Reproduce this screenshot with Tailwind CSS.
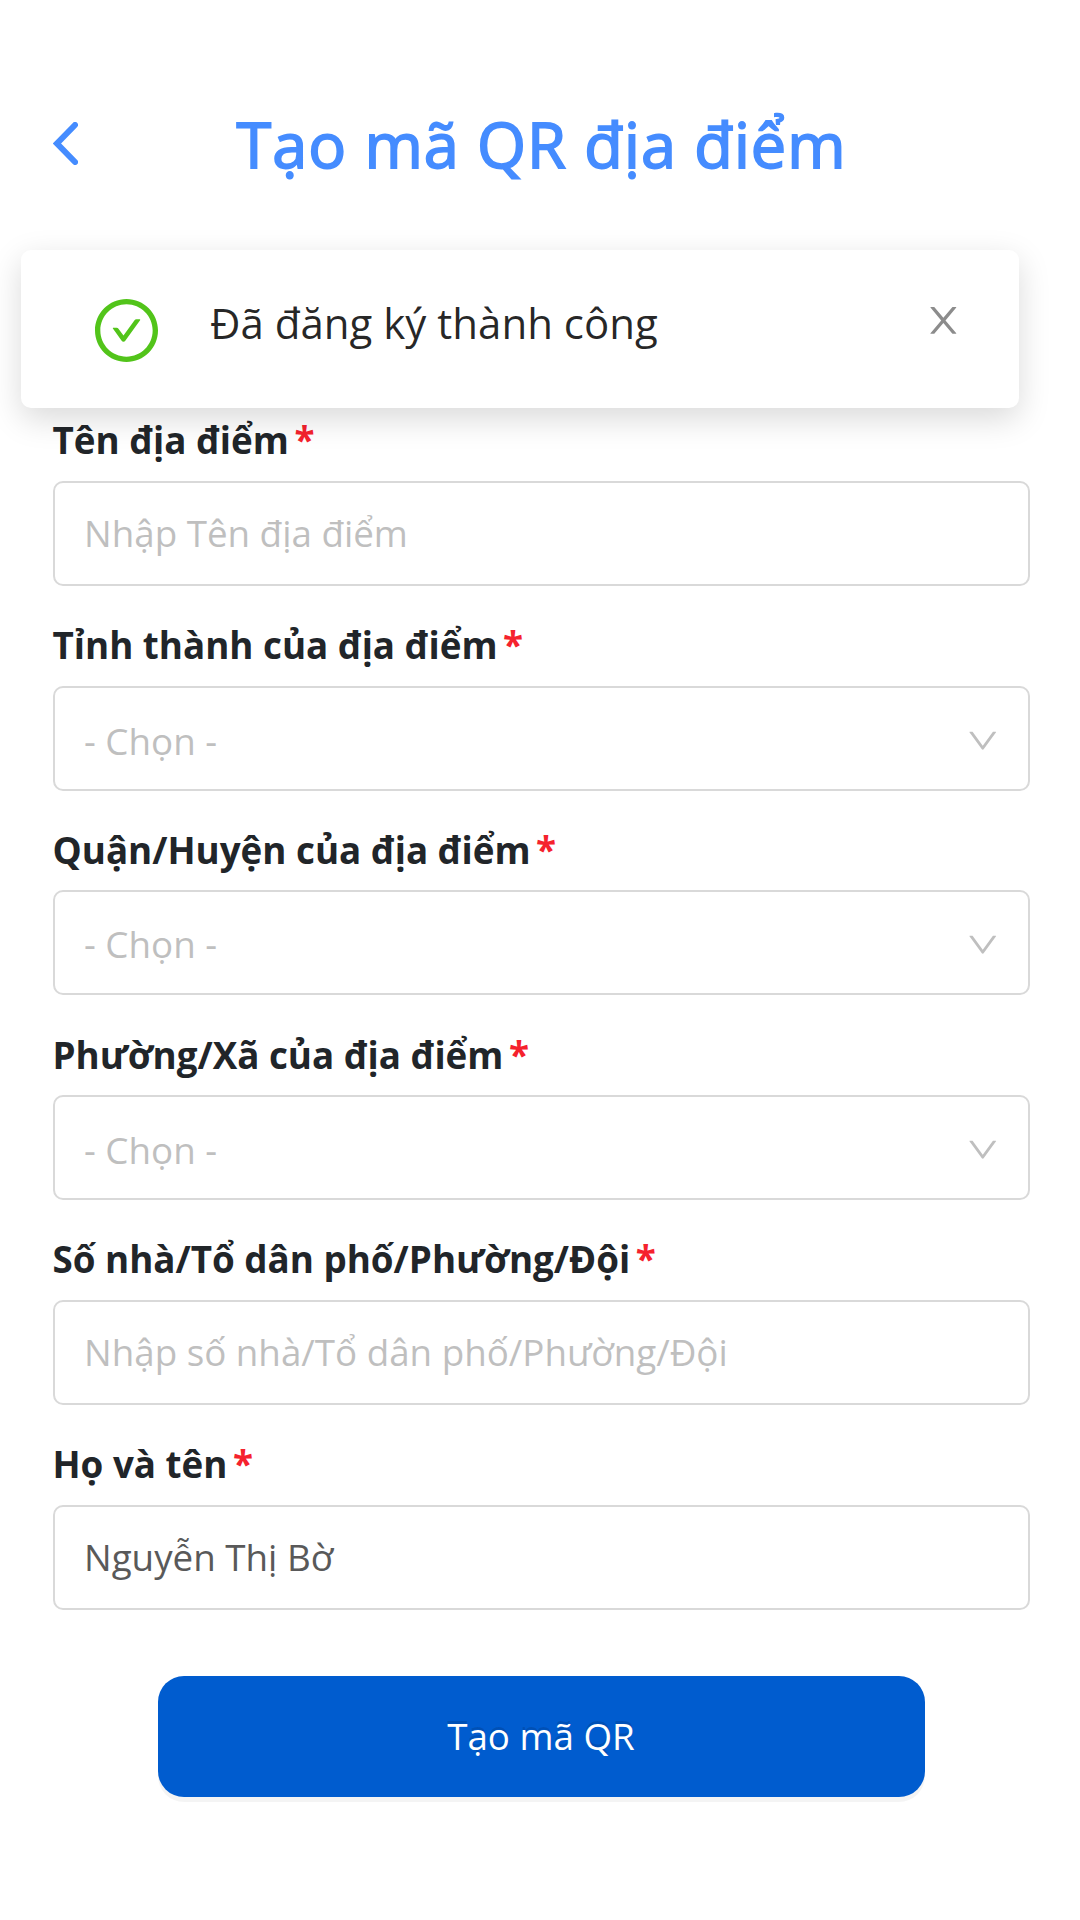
<!DOCTYPE html>
<html lang="vi">

<head>
  <meta charset="UTF-8" />
  <meta name="viewport" content="width=device-width, initial-scale=1.0" />
  <title>Tạo mã QR địa điểm</title>
  <script src="https://cdn.jsdelivr.net/npm/@tailwindcss/browser@4"></script>
</head>

<body class="relative min-h-screen overflow-hidden bg-white font-['Open_Sans',sans-serif] text-[36.75px] text-[#212529]">
  <!-- Header -->
  <header class="grid grid-cols-[100px_1fr_100px] items-center px-[53px] pt-[94px] h-[193px]">
    <button class="w-[25px]">
      <svg class="block w-[25px] h-[43px]" viewBox="0 0 25 43" fill="none" stroke="#458cff" stroke-width="6" stroke-linecap="round">
        <path d="M22 3L4 21.500L22 40" />
      </svg>
    </button>
    <h1 class="pl-[3px] text-center text-[63px] leading-[99px] tracking-[1px] text-[#458cff] whitespace-nowrap [-webkit-text-stroke:1.8px_#458cff]">Tạo mã QR địa điểm</h1>
  </header>

  <!-- Formulario -->
  <form class="flex flex-col gap-[30px] px-[53px] pr-[50px] pt-[218px]">
    <div class="flex flex-col gap-2.5">
      <label class="-ml-[0.5px] font-bold leading-[59.75px]">Tên địa điểm<span class="ml-[5.5px] text-[#f5222d]">*</span></label>
      <input type="text" placeholder="Nhập Tên địa điểm"
        class="h-[105px] w-full rounded-[10px] border-2 border-[#d9d9d9] px-[29px] pb-px text-[#595959] placeholder:text-[#bfbfbf]" />
    </div>

    <div class="flex flex-col gap-2.5">
      <label class="-ml-[0.5px] font-bold leading-[59.75px]">Tỉnh thành của địa điểm<span class="ml-[5.5px] text-[#f5222d]">*</span></label>
      <div class="flex h-[105px] items-center justify-between rounded-[10px] border-2 border-[#d9d9d9] pl-[29px] pr-[30px] text-[#bfbfbf]">
        <span class="pt-[7px]">- Chọn -</span>
        <svg class="mt-[5px] size-[31.5px]" viewBox="64 64 896 896" fill="currentColor"><path d="M884 256h-75c-5.1 0-9.9 2.5-12.9 6.6L512 654.2 227.9 262.6c-3-4.1-7.8-6.6-12.9-6.6h-75c-6.5 0-10.3 7.4-6.5 12.7l352.6 486.1c12.8 17.6 39 17.6 51.7 0l352.6-486.1c3.9-5.3.1-12.7-6.4-12.7z" /></svg>
      </div>
    </div>

    <div class="flex flex-col gap-2.5">
      <label class="-ml-[0.5px] font-bold leading-[59px]">Quận/Huyện của địa điểm<span class="ml-[5.5px] text-[#f5222d]">*</span></label>
      <div class="flex h-[105px] items-center justify-between rounded-[10px] border-2 border-[#d9d9d9] pl-[29px] pr-[30px] text-[#bfbfbf]">
        <span class="pt-1.5">- Chọn -</span>
        <svg class="mt-[5px] size-[31.5px]" viewBox="64 64 896 896" fill="currentColor"><path d="M884 256h-75c-5.1 0-9.9 2.5-12.9 6.6L512 654.2 227.9 262.6c-3-4.1-7.8-6.6-12.9-6.6h-75c-6.5 0-10.3 7.4-6.5 12.7l352.6 486.1c12.8 17.6 39 17.6 51.7 0l352.6-486.1c3.9-5.3.1-12.7-6.4-12.7z" /></svg>
      </div>
    </div>

    <div class="flex flex-col gap-2.5">
      <label class="-ml-[0.5px] font-bold leading-[60.5px]">Phường/Xã của địa điểm<span class="ml-[5.5px] text-[#f5222d]">*</span></label>
      <div class="flex h-[105px] items-center justify-between rounded-[10px] border-2 border-[#d9d9d9] pl-[29px] pr-[30px] text-[#bfbfbf]">
        <span class="pt-1.5">- Chọn -</span>
        <svg class="mt-[5px] size-[31.5px]" viewBox="64 64 896 896" fill="currentColor"><path d="M884 256h-75c-5.1 0-9.9 2.5-12.9 6.6L512 654.2 227.9 262.6c-3-4.1-7.8-6.6-12.9-6.6h-75c-6.5 0-10.3 7.4-6.5 12.7l352.6 486.1c12.8 17.6 39 17.6 51.7 0l352.6-486.1c3.9-5.3.1-12.7-6.4-12.7z" /></svg>
      </div>
    </div>

    <div class="flex flex-col gap-2.5">
      <label class="-ml-[0.5px] font-bold leading-[59.75px]">Số nhà/Tổ dân phố/Phường/Đội<span class="ml-[5.5px] text-[#f5222d]">*</span></label>
      <input type="text" placeholder="Nhập số nhà/Tổ dân phố/Phường/Đội"
        class="h-[105px] w-full rounded-[10px] border-2 border-[#d9d9d9] px-[29px] pb-px text-[#595959] placeholder:text-[#bfbfbf]" />
    </div>

    <div class="flex flex-col gap-2.5">
      <label class="-ml-[0.5px] font-bold leading-[59.75px]">Họ và tên<span class="ml-[5.5px] text-[#f5222d]">*</span></label>
      <input type="text" value="Nguyễn Thị Bờ"
        class="h-[105px] w-full rounded-[10px] border-2 border-[#d9d9d9] px-[29px] text-[#595959] placeholder:text-[#bfbfbf]" />
    </div>

    <button type="button"
      class="mx-auto mt-9 h-[121px] w-[767px] rounded-[26px] bg-[#005ccf] pr-px pt-px text-white shadow-[0_5px_0_rgba(0,0,0,0.045)] [text-shadow:0_-3px_0_rgba(0,0,0,0.12)]">Tạo mã QR</button>
  </form>

  <!-- Notificación -->
  <div class="absolute left-[21px] top-[250px] flex h-[158px] w-[998px] items-start rounded-[10px] bg-white pl-[74px] pr-[57px] shadow-[0_10.5px_31.5px_rgba(0,0,0,0.15)]">
    <svg class="mt-[49px] size-[63px] shrink-0" viewBox="64 64 896 896" fill="#52c41a">
      <path d="M699 353h-46.900c-10.200 0-19.900 4.900-25.900 13.300L469 584.300l-71.200-98.800c-6-8.300-15.600-13.300-25.900-13.300H325c-6.500 0-10.300 7.400-6.500 12.700l124.600 172.800a31.800 31.800 0 0051.700 0l210.600-292c3.900-5.300.1-12.700-6.400-12.700z" />
      <path d="M512 64C264.600 64 64 264.600 64 512s200.600 448 448 448 448-200.600 448-448S759.400 64 512 64zm0 820c-205.400 0-372-166.600-372-372s166.600-372 372-372 372 166.600 372 372-166.600 372-372 372z" />
    </svg>
    <p class="ml-[52px] mt-[40px] flex-1 text-[42px] leading-[66px] text-black/85">Đã đăng ký thành công</p>
    <button class="mt-[52px]">
      <svg class="block size-[36.75px]" viewBox="64 64 896 896" fill="#8c8c8c"><path d="M563.8 512l262.500-312.900c4.400-5.200.7-13.100-6.100-13.100h-79.800c-4.700 0-9.200 2.100-12.300 5.700L511.600 449.800 295.100 191.700c-3-3.600-7.500-5.700-12.300-5.700H203c-6.800 0-10.500 7.900-6.100 13.100L459.400 512 196.900 824.900A7.950 7.950 0 00203 838h79.800c4.700 0 9.200-2.100 12.300-5.700l216.500-258.100 216.500 258.100c3 3.600 7.500 5.700 12.300 5.700h79.800c6.800 0 10.500-7.900 6.100-13.100L563.800 512z" /></svg>
    </button>
  </div>
</body>

</html>
